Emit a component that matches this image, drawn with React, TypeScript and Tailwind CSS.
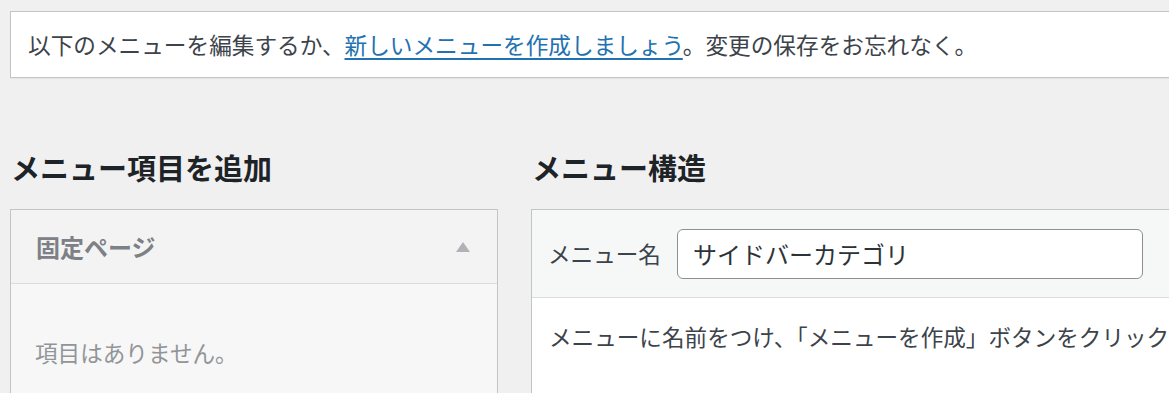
export default function App() {
  return (
    <div className="w-[1169px] h-[393px] overflow-hidden bg-[#f0f0f1] font-['Noto_Sans_CJK_JP','Noto_Sans',sans-serif] text-[#3c434a]">
      <div className="pl-[10px] pt-[11px]">
        <div className="w-[1250px] h-[67px] border border-[#c3c4c7] bg-white pl-[17px] pt-[18px] shadow-[0_1px_1px_rgba(0,0,0,0.04)]">
          <p className="text-[22.65px] leading-[30px] whitespace-nowrap">
            以下のメニューを編集するか、
            <a href="#" className="text-[#2271b1] underline decoration-[1.5px] underline-offset-[4px]">新しいメニューを作成しましょう</a>
            。変更の保存をお忘れなく。
          </p>
        </div>
      </div>

      <div className="flex gap-[33px] pl-[10px]">
        <div className="w-[488px] shrink-0">
          <h2 className="mt-[69px] mb-[22px] h-[40px] pl-[1px] text-[29px] leading-[40px] font-bold text-[#1d2327] whitespace-nowrap">
            メニュー項目を追加
          </h2>
          <div className="border border-[#c3c4c7] bg-[#f7f7f7] h-[300px]">
            <div className="h-[74px] bg-[#f3f3f3] border-b border-[#dcdcde] flex items-center justify-between pl-[25px] pr-[27px]">
              <span className="text-[24px] leading-[30px] font-bold text-[#7d8084]">固定ページ</span>
              <svg width="14" height="10" viewBox="0 0 14 10" className="block">
                <polygon points="7,0 14,10 0,10" fill="#b0b2b5" />
              </svg>
            </div>
            <p className="pt-[54px] pl-[24px] text-[22.6px] leading-[30px] text-[#929598]">項目はありません。</p>
          </div>
        </div>

        <div className="w-[700px] shrink-0">
          <h2 className="mt-[69px] mb-[22px] h-[40px] pl-[1px] text-[29px] leading-[40px] font-bold text-[#1d2327] whitespace-nowrap">
            メニュー構造
          </h2>
          <div className="border border-[#c3c4c7] bg-white h-[300px]">
            <div className="h-[88px] bg-[#f6f7f7] border-b border-[#dcdcde] flex items-start pl-[16px] pt-[19px]">
              <span className="text-[22.6px] leading-[50px] w-[114px] whitespace-nowrap">メニュー名</span>
              <div className="ml-[15px] w-[466px] h-[50px] rounded-[6px] border border-[#8c8f94] bg-white pl-[15px] flex items-center">
                <span className="text-[24px] leading-[30px] text-[#2c3338] whitespace-nowrap">サイドバーカテゴリ</span>
              </div>
            </div>
            <p className="pt-[24px] pl-[17px] text-[22.6px] leading-[30px] whitespace-nowrap">
              メニューに名前をつけ、「メニューを作成」ボタンをクリック
            </p>
          </div>
        </div>
      </div>
    </div>
  );
}
